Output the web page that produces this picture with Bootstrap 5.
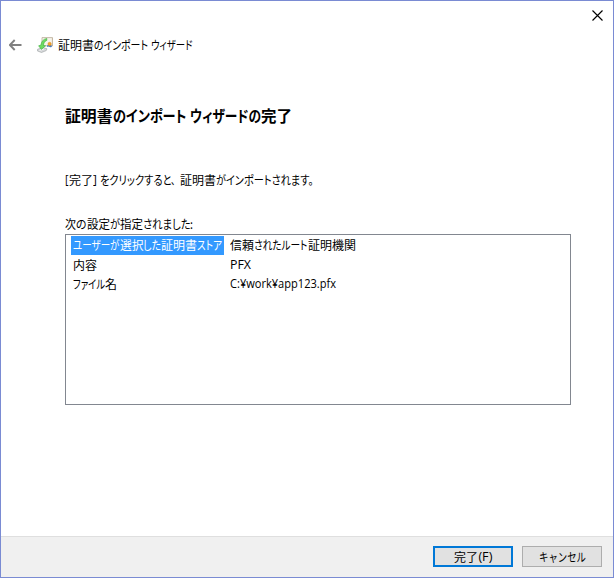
<!DOCTYPE html>
<html lang="ja">
<head>
<meta charset="utf-8">
<meta name="viewport" content="width=device-width, initial-scale=1">
<title>証明書のインポート ウィザード</title>
<link href="https://cdn.jsdelivr.net/npm/bootstrap@5.3.0/dist/css/bootstrap.min.css" rel="stylesheet">
<style>
body{font-family:"Noto Sans CJK JP",sans-serif;font-size:12px;line-height:19px;color:#000;font-feature-settings:"palt";overflow:hidden}
.wizard{height:578px;border:1px solid #7a8bd3;background:#fff}
.titlebar{height:29px;padding:9px 10px 0 0}
.wizard-head{height:30px;padding:5px 0 0 7px}
.wizard-head .back{margin:4px 15px 0 1px}
.wizard-head .cert{margin:2px 5px 0 0}
.wizard-body{padding:0 42px 0 64px}
.run{display:block;flex:none;white-space:pre;transform-origin:0 50%}
.fullwidth{font-feature-settings:normal}
.latin{font-family:"Open Sans","Noto Sans CJK JP",sans-serif}
.heading{font-size:15.5px;font-weight:700;line-height:24px;margin-top:43px}
.message{margin-top:43px}
.caption{margin-top:25px}
.settings{height:171px;border:1px solid #828790;margin-top:1px;padding:1px 5px}
.key{width:153px;height:19px;padding-left:2px}
.key.selected{background:#39f;color:#fff}
.selected .run,.selected + .value .run{margin-top:-1px}
.value{height:19px;padding-left:6px}
.wizard-foot{height:41px;background:#f0f0f0;border-top:1px solid #dfdfdf;padding:9px 11px 0 0;gap:9px}
.wizard-foot .btn{width:80px;height:21px;padding:0;border:1px solid #adadad;border-radius:0;background:#e1e1e1;color:#000;font-size:12px;line-height:19px}
.wizard-foot .btn.default{border:2px solid #0078d7}
</style>
<script src="https://cdn.jsdelivr.net/npm/bootstrap@5.3.0/dist/js/bootstrap.bundle.min.js"></script>
</head>
<body>
<main class="wizard d-flex flex-column">
  <div class="titlebar d-flex justify-content-end align-items-start">
    <svg width="11" height="11" viewBox="0 0 11 11" role="img" aria-label="閉じる"><path d="M.5.5l10 10M10.5.5l-10 10" stroke="#000" stroke-width="1.15"/></svg>
  </div>
  <header class="wizard-head d-flex align-items-start">
    <svg class="back" width="13" height="12" viewBox="0 0 13 12"><path d="M5.7 1L.9 6l4.8 5M1.2 6H12.5" fill="none" stroke="#808080" stroke-width="1.9"/></svg>
    <svg class="cert" width="16" height="16" viewBox="0 0 16 16">
      <path d="M5 .6h10.5v8.2H5z" fill="#f7f4eb" stroke="#b7aa96" stroke-width=".8"/>
      <path d="M15.4 1v8" stroke="#c4b69f" stroke-width=".8"/>
      <path d="M.6 12.2L6 10.6l4 1.2-.8 1.8-4.7 1.9L.4 13.9z" fill="#d6d8da" stroke="#999da0" stroke-width=".6"/>
      <path d="M2.5 13.4l4.5-1.5" stroke="#f8f8f8"/>
      <path d="M9.8 1.4C6 2.2 4.2 4.8 4 8L1.6 8.8l2.8 3.6 4.2-3.6-2.1-.3C6.6 6 7.6 4.3 9.8 3.4z" fill="#6ddb5f" stroke="#3bac3d" stroke-width=".6"/>
      <path d="M10.4 8l-.4 2 1.6-.6 1.6.8 1.7-.3-.6-2z" fill="#477cc0"/>
      <circle cx="12.6" cy="7" r="1.7" fill="#f4a62a" stroke="#d98218" stroke-width=".5"/>
    </svg>
    <div class="d-flex"><span class="run" data-w="36">証明書</span><span class="run" data-w="54">のインポート</span><span class="run" data-w="3"> </span><span class="run" data-w="41.5">ウィザード</span></div>
  </header>
  <section class="wizard-body flex-grow-1">
    <h1 class="heading d-flex mb-0"><span class="run" data-w="47.5">証明書</span><span class="run" data-w="73.5">のインポート</span><span class="run" data-w="3.5"> </span><span class="run" data-w="71">ウィザードの</span><span class="run" data-w="31">完了</span></h1>
    <p class="message d-flex mb-0"><span class="run latin" data-w="3.5">[</span><span class="run" data-w="24">完了</span><span class="run latin" data-w="7">] </span><span class="run" data-w="71.5">をクリックすると</span><span class="run fullwidth" data-w="8.5">、</span><span class="run" data-w="36">証明書</span><span class="run" data-w="97.5">がインポートされます。</span></p>
    <p class="caption d-flex mb-0"><span class="run" data-w="11">次</span><span class="run" data-w="10.5">の</span><span class="run" data-w="23">設定</span><span class="run" data-w="10">が</span><span class="run" data-w="23">指定</span><span class="run" data-w="47.5">されました</span><span class="run" data-w="3">:</span></p>
    <div class="settings">
      <div class="d-flex"><div class="key selected d-flex"><span class="run" data-w="46.5">ユーザーが</span><span class="run" data-w="23.5">選択</span><span class="run" data-w="18">した</span><span class="run" data-w="36">証明書</span><span class="run" data-w="25">ストア</span></div><div class="value d-flex"><span class="run" data-w="24">信頼</span><span class="run" data-w="53.5">されたルート</span><span class="run" data-w="48">証明機関</span></div></div>
      <div class="d-flex"><div class="key d-flex"><span class="run" data-w="24">内容</span></div><div class="value d-flex"><span class="run latin" data-w="21">PFX</span></div></div>
      <div class="d-flex"><div class="key d-flex"><span class="run" data-w="32">ファイル</span><span class="run" data-w="12">名</span></div><div class="value d-flex"><span class="run latin" data-w="106">C:¥work¥app123.pfx</span></div></div>
    </div>
  </section>
  <footer class="wizard-foot d-flex justify-content-end align-items-start">
    <button type="button" class="btn default d-flex justify-content-center align-items-center"><span class="run" data-w="24">完了</span><span class="run latin" data-w="14">(F)</span></button>
    <button type="button" class="btn d-flex justify-content-center align-items-center"><span class="run" data-w="47">キャンセル</span></button>
  </footer>
</main>
<script>
// Condense each text run to its UI advance width.
document.querySelectorAll('.run').forEach(function (run) {
  var natural = run.getBoundingClientRect().width;
  var target = parseFloat(run.dataset.w);
  run.style.width = target + 'px';
  if (natural > 0) run.style.transform = 'scaleX(' + target / natural + ')';
});
</script>
</body>
</html>
